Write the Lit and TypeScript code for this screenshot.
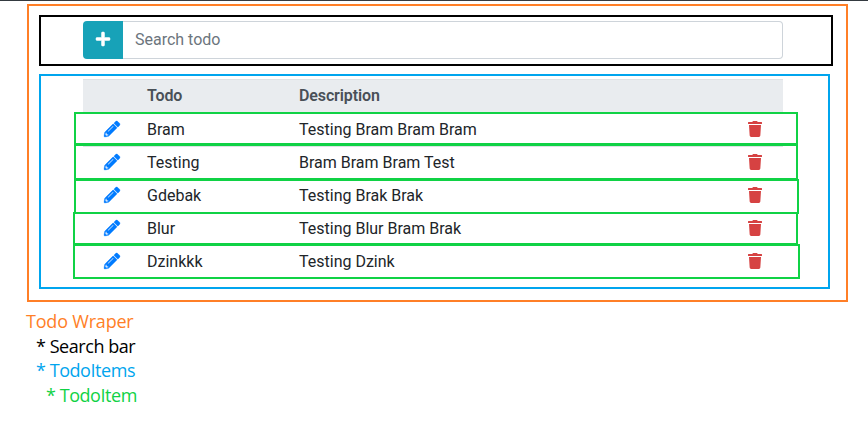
import { LitElement, html, css, svg } from "lit";
import { customElement, property } from "lit/decorators.js";

const pencil = svg`<path d="M497.9 142.1l-46.1 46.1c-4.7 4.7-12.3 4.7-17 0l-111-111c-4.7-4.7-4.7-12.3 0-17l46.1-46.1c18.7-18.7 49.1-18.7 67.9 0l60.1 60.1c18.8 18.7 18.8 49.1 0 67.9zM284.2 99.8L21.6 362.4.4 483.9c-2.9 16.4 11.4 30.6 27.8 27.8l121.5-21.3 262.6-262.6c4.7-4.7 4.7-12.3 0-17l-111-111c-4.8-4.7-12.4-4.7-17.1 0zM124.1 339.9c-5.5-5.5-5.5-14.3 0-19.8l154-154c5.5-5.5 14.3-5.5 19.8 0s5.500 14.300 0 19.800l-154 154c-5.500 5.500-14.300 5.500-19.800 0zM88 424h48v36.300l-64.500 11.300-31.100-31.100L51.700 376H88v48z"/>`;
const trash = svg`<path d="M432 32H312l-9.400-18.700A24 24 0 0 0 281.100 0H166.800a23.720 23.720 0 0 0-21.400 13.300L136 32H16A16 16 0 0 0 0 48v32a16 16 0 0 0 16 16h416a16 16 0 0 0 16-16V48a16 16 0 0 0-16-16zM53.200 467a48 48 0 0 0 47.900 45h245.800a48 48 0 0 0 47.900-45L416 128H32z"/>`;
const plus = svg`<path d="M416 208H272V64c0-17.670-14.330-32-32-32h-32c-17.670 0-32 14.330-32 32v144H32c-17.670 0-32 14.330-32 32v32c0 17.670 14.330 32 32 32h144v144c0 17.670 14.330 32 32 32h32c17.670 0 32-14.330 32-32V304h144c17.670 0 32-14.330 32-32v-32c0-17.670-14.330-32-32-32z"/>`;

@customElement("search-bar")
class SearchBar extends LitElement {
  static styles = css`
    :host { display: flex; box-sizing: border-box; height: 51px; border: 2px solid #000; padding: 4px 48px 0 42px; }
    button { box-sizing: border-box; width: 40px; height: 38px; border: 0; padding: 0 0 2px; background: #17a2b8; border-radius: 4px 0 0 4px; display: flex; align-items: center; justify-content: center; }
    svg { width: 14px; height: 16px; fill: #fff; stroke: #fff; stroke-width: 16; overflow: visible; }
    input { flex: 1; min-width: 0; box-sizing: border-box; height: 38px; border: 1px solid #ced4da; border-left: 0; border-radius: 0 4px 4px 0; padding: 5px 12px 7px; font: 16px/24px Roboto, sans-serif; outline: 0; background: #fff; }
    input::placeholder { color: #6c757d; opacity: 1; }
  `;
  render() {
    return html`<button aria-label="Add"><svg viewBox="0 0 448 512">${plus}</svg></button><input placeholder="Search todo" />`;
  }
}

@customElement("todo-item")
class TodoItem extends LitElement {
  @property() name = "";
  @property() description = "";
  static styles = css`
    :host { display: grid; grid-template-columns: 64px 152px 1fr 56px; align-items: center; position: relative; box-sizing: border-box; height: 33px; border-top: 1px solid #dee2e6; color: #212529; }
    svg { height: 16px; margin-bottom: 2px; }
    .edit { width: 16px; fill: #007bff; stroke: #007bff; stroke-width: 10; overflow: visible; margin-left: 21.4px; }
    .remove { width: 14px; fill: #d64242; margin-left: 21px; }
    .outline { position: absolute; box-sizing: border-box; border: 2px solid #10d245; inset: var(--outline); }
  `;
  render() {
    return html`
      <svg class="edit" viewBox="0 0 512 512">${pencil}</svg>
      <span>${this.name}</span>
      <span>${this.description}</span>
      <svg class="remove" viewBox="0 0 448 512">${trash}</svg>
      <div class="outline"></div>`;
  }
}

/* Outline insets are top, right, bottom, left relative to the row. */
const todos = [
  { name: "Bram", description: "Testing Bram Bram Bram", outline: "-2px -15px 1px -9px" },
  { name: "Testing", description: "Bram Bram Bram Test", outline: "-3px -15px -1px -9px" },
  { name: "Gdebak", description: "Testing Brak Brak", outline: "-1px -16px -2px -9px" },
  { name: "Blur", description: "Testing Blur Bram Brak", outline: "-1px -15px 0px -10px" },
  { name: "Dzinkkk", description: "Testing Dzink", outline: "-2px -17px -1px -10px" },
];

@customElement("todo-items")
class TodoItems extends LitElement {
  static styles = css`
    :host { display: block; box-sizing: border-box; width: 791px; height: 215px; border: 2px solid #00a5ee; padding: 3px 45px 0 42px; }
    .head { display: grid; grid-template-columns: 64px 152px 1fr; align-items: center; box-sizing: border-box; height: 34px; border-top: 1px solid #dee2e6; padding-bottom: 1px; background: #e9ecef; color: #495057; font-weight: 600; letter-spacing: -0.12px; }
  `;
  render() {
    return html`
      <div class="head"><span></span><span>Todo</span><span>Description</span></div>
      ${todos.map((t) => html`<todo-item .name=${t.name} .description=${t.description} style="--outline: ${t.outline}"></todo-item>`)}`;
  }
}

@customElement("app-root")
class AppRoot extends LitElement {
  static styles = css`
    :host { display: block; box-sizing: border-box; height: 427px; overflow: hidden; border-top: 1px solid #343a40; background: #fff; font: 16px/24px Roboto, sans-serif; }
    .wrapper { box-sizing: border-box; width: 821px; height: 298px; margin: 3px 0 0 27px; border: 2px solid #ff7f27; padding: 9px 13px 0 10px; display: flex; flex-direction: column; gap: 8px; }
    .legend { margin: 7px 0 0 26px; font: 18px/24.7px "Open Sans", sans-serif; letter-spacing: -0.45px; }
    .legend div { width: max-content; }
    .root { color: #ff7f27; letter-spacing: -0.2px; }
    .search { color: #000; padding-left: 10px; }
    .items { color: #00a5ee; padding-left: 10px; }
    .item { color: #10d245; padding-left: 20px; }
  `;
  render() {
    return html`
      <div class="wrapper"><search-bar></search-bar><todo-items></todo-items></div>
      <div class="legend">
        <div class="root">Todo Wraper</div>
        <div class="search">* Search bar</div>
        <div class="items">* TodoItems</div>
        <div class="item">* TodoItem</div>
      </div>`;
  }
}
